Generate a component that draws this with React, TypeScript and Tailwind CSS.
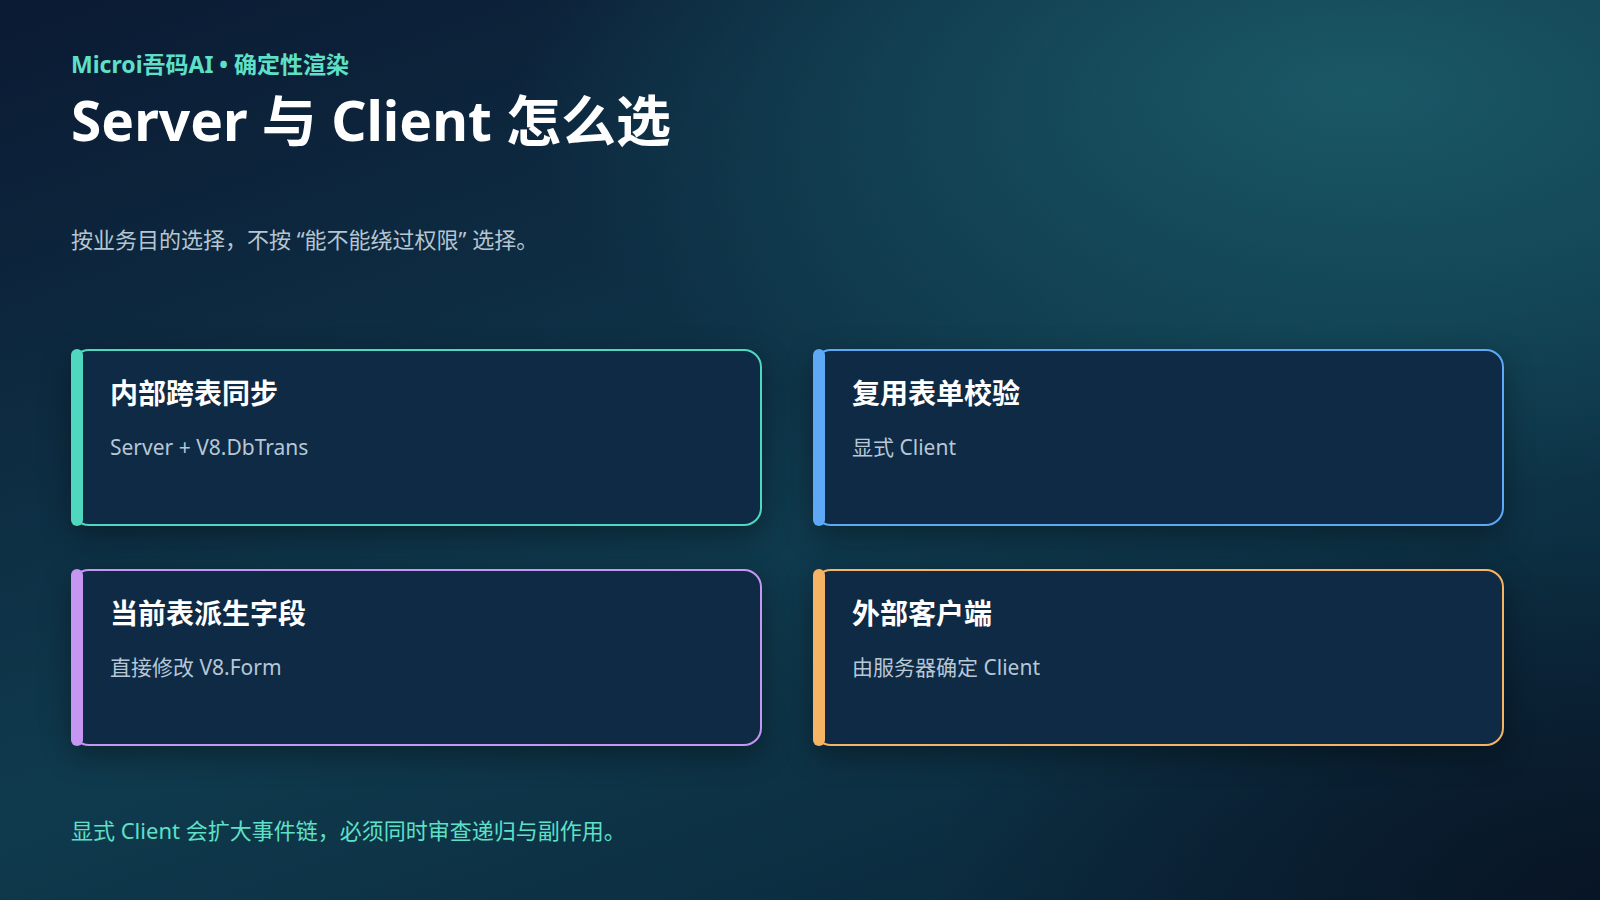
const cards = [
  { title: "内部跨表同步", desc: "Server + V8.DbTrans", border: "border-[#4fd8bf]", bar: "bg-[#4fd8bf]" },
  { title: "复用表单校验", desc: "显式 Client", border: "border-[#5ea8f5]", bar: "bg-[#5ea8f5]" },
  { title: "当前表派生字段", desc: "直接修改 V8.Form", border: "border-[#c596f2]", bar: "bg-[#c596f2]" },
  { title: "外部客户端", desc: "由服务器确定 Client", border: "border-[#f5b565]", bar: "bg-[#f5b565]" },
];

function Card({ title, desc, border, bar }: (typeof cards)[number]) {
  return (
    <div className={`relative h-[177px] rounded-[18px] border-2 ${border} bg-[#0e2a45] pl-[37px] pt-[20px] shadow-[0_10px_30px_rgba(0,0,0,0.35)]`}>
      <div className={`absolute -left-[2px] -top-[2px] -bottom-[2px] w-[12px] rounded-full ${bar}`} />
      <div className="text-[28px] font-bold leading-[44px] text-white">{title}</div>
      <div className="mt-[16px] text-[21px] leading-[32px] text-[#b7c7d6]">{desc}</div>
    </div>
  );
}

export default function App() {
  return (
    <div
      className="h-[900px] w-[1600px] overflow-hidden bg-[#0b1c33] px-[71px] pt-[46px] bg-[radial-gradient(ellipse_70%_60%_at_85%_10%,#1a5866_0%,rgba(22,80,95,0.6)_40%,transparent_75%),radial-gradient(ellipse_60%_60%_at_100%_100%,#081525_0%,transparent_70%),linear-gradient(160deg,#0b1a33_0%,#0f3a4d_55%,#0a2438_100%)]"
      style={{ fontFamily: '"Noto Sans", "Noto Sans CJK SC", sans-serif' }}
    >
      <div className="text-[23px] font-bold leading-[36px] text-[#5ee0c8]">Microi吾码AI • 确定性渲染</div>
      <h1 className="mt-[2px] text-[55px] font-bold leading-[72px] text-white">Server 与 Client 怎么选</h1>
      <p className="mt-[66px] text-[22px] leading-[34px] text-[#b5c5d2]">按业务目的选择，不按 “能不能绕过权限” 选择。</p>
      <div className="mt-[93px] grid w-[1433px] grid-cols-2 gap-x-[51px] gap-y-[43px]">
        {cards.map((c) => (
          <Card key={c.title} {...c} />
        ))}
      </div>
      <p className="mt-[67px] text-[22px] leading-[34px] text-[#5ee0c8]">显式 Client 会扩大事件链，必须同时审查递归与副作用。</p>
    </div>
  );
}
